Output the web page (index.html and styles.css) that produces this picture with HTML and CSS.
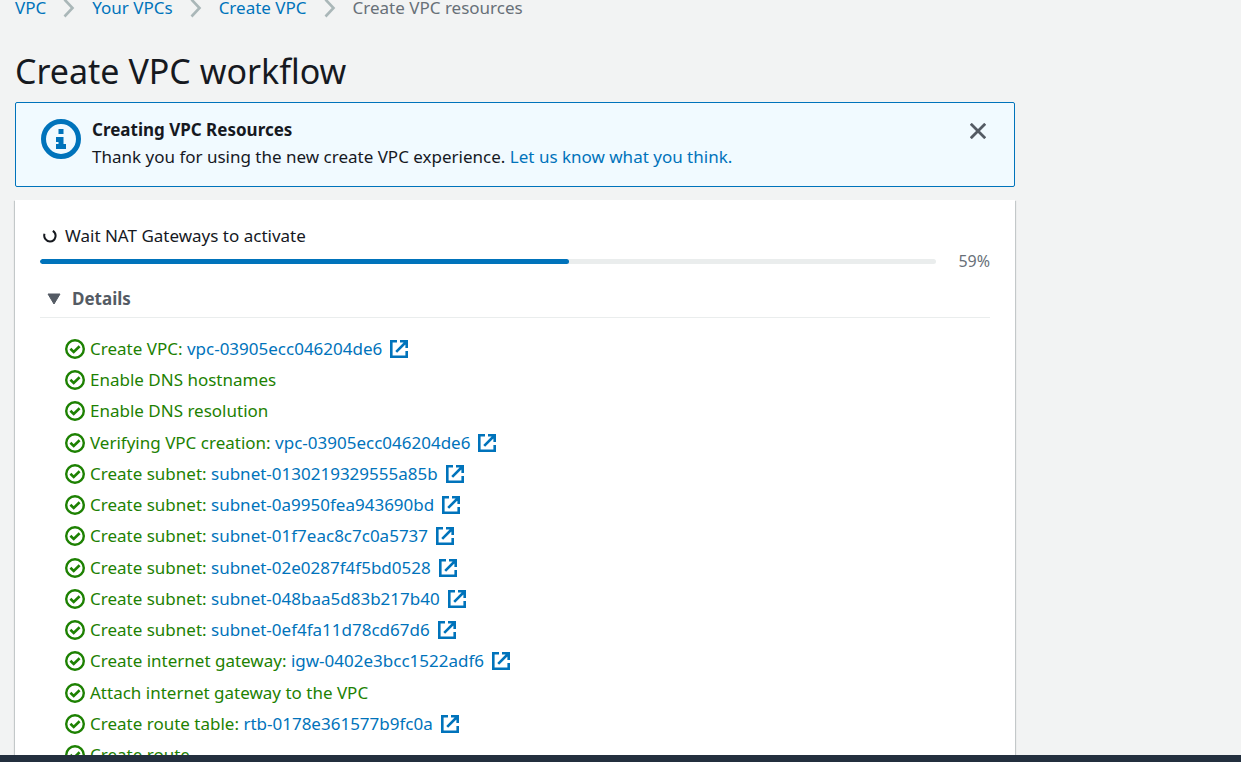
FILE: index.html
```html
<!DOCTYPE html>
<html lang="en">
<head>
<meta charset="utf-8">
<title>Create VPC workflow</title>
<link rel="stylesheet" href="styles.css">
</head>
<body>
<svg class="sprite" aria-hidden="true">
  <symbol id="check" viewBox="0 0 20 20"><circle cx="10" cy="10" r="8.8" fill="none" stroke="currentColor" stroke-width="2.4"/><path d="M5.400 9.800 8.700 13l5.900-5.800" fill="none" stroke="currentColor" stroke-width="2.600"/></symbol>
  <symbol id="external" viewBox="0 0 18 18"><path d="M7 1.300H1.300v15.400h15.400V11M10 1.300h6.700V8M16.500 1.500 6.200 11.800" fill="none" stroke="currentColor" stroke-width="2.600"/></symbol>
  <symbol id="chevron" viewBox="0 0 12 20"><path d="M1.500 1.500 9.500 10l-8 8.500" fill="none" stroke="currentColor" stroke-width="2.600"/></symbol>
</svg>
<main class="page">
  <nav aria-label="Breadcrumbs">
    <ol class="crumbs">
      <li class="crumb"><a href="#">VPC</a><svg class="chevron"><use href="#chevron"/></svg></li>
      <li class="crumb"><a href="#">Your VPCs</a><svg class="chevron"><use href="#chevron"/></svg></li>
      <li class="crumb"><a href="#">Create VPC</a><svg class="chevron"><use href="#chevron"/></svg></li>
      <li class="crumb">Create VPC resources</li>
    </ol>
  </nav>
  <h1 class="title">Create VPC workflow</h1>
  <section class="notice">
    <svg class="info" viewBox="0 0 40 40"><circle cx="20" cy="20" r="17.5" fill="none" stroke="currentColor" stroke-width="5"/><path d="M17.500 10h5v5h-5zM15 18h7.500v7H25v5H15v-5h2.500v-2H15z" fill="currentColor"/></svg>
    <div class="notice-text">
      <h2 class="notice-title">Creating VPC Resources</h2>
      <p class="notice-body">Thank you for using the new create VPC experience. <a href="#">Let us know what you think.</a></p>
    </div>
    <button class="close" type="button" aria-label="Dismiss"><svg class="cross" viewBox="0 0 16 16"><path d="M.8.8 15.200 15.200M15.200.8.8 15.200" stroke="currentColor" stroke-width="2.800"/></svg></button>
  </section>
  <section class="card">
    <p class="status"><svg class="spinner" viewBox="0 0 14 14"><path d="M1.500 4.800C.2 8.600 3.500 12.500 7 12.500c5.700 0 7.600-7.700 2.800-10.700" fill="none" stroke="currentColor" stroke-width="2"/></svg>Wait NAT Gateways to activate</p>
    <div class="progress">
      <div class="track" role="progressbar" aria-label="Wait NAT Gateways to activate" aria-valuenow="59" aria-valuemin="0" aria-valuemax="100"><div class="fill" style="width:59%"></div></div>
      <span class="percent">59%</span>
    </div>
    <button class="details" type="button" aria-expanded="true"><svg class="caret" viewBox="0 0 14 12"><path d="M1 1h12L7 11z" fill="currentColor" stroke="currentColor" stroke-linejoin="round"/></svg>Details</button>
    <ul class="steps">
      <li class="step"><svg class="check"><use href="#check"/></svg><span>Create VPC: <a href="#">vpc-03905ecc046204de6</a></span><svg class="external"><use href="#external"/></svg></li>
      <li class="step"><svg class="check"><use href="#check"/></svg><span>Enable DNS hostnames</span></li>
      <li class="step"><svg class="check"><use href="#check"/></svg><span>Enable DNS resolution</span></li>
      <li class="step"><svg class="check"><use href="#check"/></svg><span>Verifying VPC creation: <a href="#">vpc-03905ecc046204de6</a></span><svg class="external"><use href="#external"/></svg></li>
      <li class="step"><svg class="check"><use href="#check"/></svg><span>Create subnet: <a href="#">subnet-0130219329555a85b</a></span><svg class="external"><use href="#external"/></svg></li>
      <li class="step"><svg class="check"><use href="#check"/></svg><span>Create subnet: <a href="#">subnet-0a9950fea943690bd</a></span><svg class="external"><use href="#external"/></svg></li>
      <li class="step"><svg class="check"><use href="#check"/></svg><span>Create subnet: <a href="#">subnet-01f7eac8c7c0a5737</a></span><svg class="external"><use href="#external"/></svg></li>
      <li class="step"><svg class="check"><use href="#check"/></svg><span>Create subnet: <a href="#">subnet-02e0287f4f5bd0528</a></span><svg class="external"><use href="#external"/></svg></li>
      <li class="step"><svg class="check"><use href="#check"/></svg><span>Create subnet: <a href="#">subnet-048baa5d83b217b40</a></span><svg class="external"><use href="#external"/></svg></li>
      <li class="step"><svg class="check"><use href="#check"/></svg><span>Create subnet: <a href="#">subnet-0ef4fa11d78cd67d6</a></span><svg class="external"><use href="#external"/></svg></li>
      <li class="step"><svg class="check"><use href="#check"/></svg><span>Create internet gateway: <a href="#">igw-0402e3bcc1522adf6</a></span><svg class="external"><use href="#external"/></svg></li>
      <li class="step"><svg class="check"><use href="#check"/></svg><span>Attach internet gateway to the VPC</span></li>
      <li class="step"><svg class="check"><use href="#check"/></svg><span>Create route table: <a href="#">rtb-0178e361577b9fc0a</a></span><svg class="external"><use href="#external"/></svg></li>
      <li class="step"><svg class="check"><use href="#check"/></svg><span>Create route</span></li>
    </ul>
  </section>
</main>
<footer class="footer"></footer>
</body>
</html>
```
FILE: styles.css
```css
* { box-sizing: border-box; }
body {
  margin: 0;
  height: 100vh;
  display: flex;
  flex-direction: column;
  overflow: hidden;
  background: #f2f3f3;
  color: #16191f;
  font: 17px/27px "Noto Sans", sans-serif;
}
h1, h2, p, ol, ul { margin: 0; padding: 0; }
ol, ul { list-style: none; }
a { color: #0073bb; text-decoration: none; }
svg { flex: none; }
button { border: 0; padding: 0; background: none; font: inherit; cursor: pointer; }
.sprite { position: absolute; width: 0; height: 0; }
.page { flex: 1; min-height: 0; overflow: hidden; padding: 0 15px; }
.crumbs { display: flex; line-height: 16px; color: #687078; }
.crumb { display: flex; align-items: center; }
.chevron { width: 12px; height: 20px; margin: -2px 17px; color: #aab7b8; }
.title { margin: 31px 0 7px; font-size: 34px; line-height: 48px; font-weight: 400; }
.notice {
  display: flex;
  max-width: 1000px;
  padding: 13px 25px 16px;
  border: 1px solid #0073bb;
  border-radius: 2px;
  background: #f1faff;
}
.info { width: 40px; height: 40px; margin: 3px 11px 0 0; color: #0073bb; }
.notice-text { flex: 1; }
.notice-title { font-size: 17px; line-height: 27px; font-weight: 700; }
.close { align-self: flex-start; width: 22px; height: 30px; color: #545b64; }
.cross { display: block; width: 16px; height: 16px; margin: 0 auto; }
.card {
  max-width: 1000px;
  margin-top: 13px;
  padding: 22px 25px;
  background: #fff;
  box-shadow: 0 1px 1px rgba(0, 28, 36, .3), 1px 1px 1px rgba(0, 28, 36, .15), -1px 1px 1px rgba(0, 28, 36, .15);
}
.status { display: flex; align-items: center; gap: 8px; padding-left: 3px; }
.spinner { width: 14px; height: 14px; }
.progress { display: flex; align-items: center; gap: 22px; line-height: 24px; }
.track { flex: 1; height: 5px; border-radius: 3px; background: #eaeded; overflow: hidden; }
.fill { height: 100%; border-radius: 3px; background: #0073bb; }
.percent { font-size: 16px; color: #687078; }
.details {
  display: flex;
  align-items: center;
  gap: 11px;
  width: 100%;
  padding: 12px 0 5px 7px;
  border-bottom: 1px solid #eaeded;
  color: #545b64;
  font-weight: 700;
}
.caret { width: 14px; height: 12px; }
.steps { padding: 15px 25px 0; color: #1d8102; line-height: 31px; }
.step { display: flex; align-items: center; gap: 5px; }
.step:nth-child(4n) { margin-top: 1px; }
.check { width: 20px; height: 20px; }
.external { width: 18px; height: 18px; margin-left: 3px; color: #0073bb; }
.footer { flex: none; height: 7px; background: #232f3e; }
```
